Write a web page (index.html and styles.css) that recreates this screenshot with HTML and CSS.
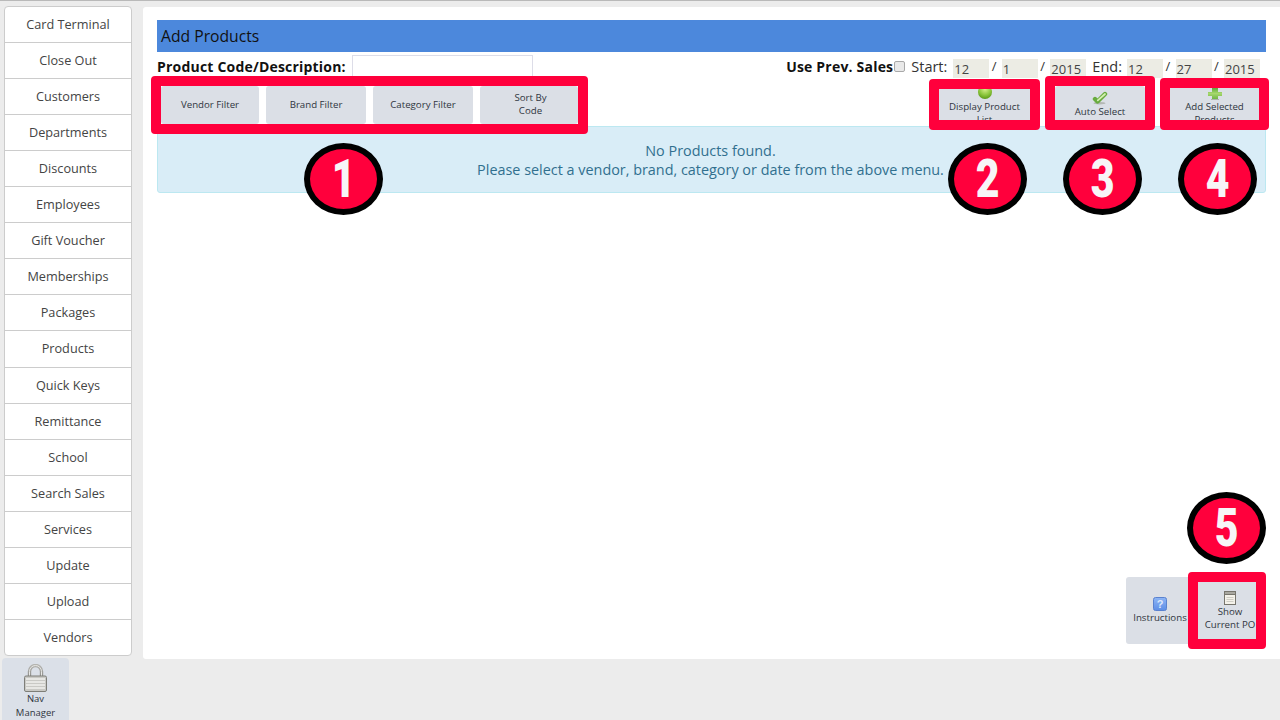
FILE: index.html
```html
<!DOCTYPE html>
<html lang="en">
<head>
<meta charset="utf-8">
<title>Add Products</title>
<link rel="stylesheet" href="styles.css">
</head>
<body>
<div class="layout">
  <nav class="sidebar">
    <a class="side-item">Card Terminal</a>
    <a class="side-item">Close Out</a>
    <a class="side-item">Customers</a>
    <a class="side-item">Departments</a>
    <a class="side-item">Discounts</a>
    <a class="side-item">Employees</a>
    <a class="side-item">Gift Voucher</a>
    <a class="side-item">Memberships</a>
    <a class="side-item">Packages</a>
    <a class="side-item side-tall">Products</a>
    <a class="side-item">Quick Keys</a>
    <a class="side-item">Remittance</a>
    <a class="side-item">School</a>
    <a class="side-item">Search Sales</a>
    <a class="side-item">Services</a>
    <a class="side-item">Update</a>
    <a class="side-item">Upload</a>
    <a class="side-item side-last">Vendors</a>
  </nav>
  <main class="main">
    <h1 class="title">Add Products</h1>
    <div class="form-row">
      <label class="label">Product Code/Description:</label>
      <input class="search" type="text">
      <div class="dates">
        <label class="label">Use Prev. Sales</label>
        <input class="check" type="checkbox">
        <span class="date-word date-start">Start:</span>
        <span class="date-box">12</span><span class="slash">/</span>
        <span class="date-box">1</span><span class="slash">/</span>
        <span class="date-box">2015</span>
        <span class="date-word date-end">End:</span>
        <span class="date-box">12</span><span class="slash">/</span>
        <span class="date-box">27</span><span class="slash">/</span>
        <span class="date-box">2015</span>
      </div>
    </div>
    <div class="toolbar">
      <button class="btn btn-filter b-vendor">Vendor Filter</button>
      <button class="btn btn-filter b-brand">Brand Filter</button>
      <button class="btn btn-filter b-category">Category Filter</button>
      <button class="btn btn-filter b-sort">Sort By<br>Code</button>
      <button class="btn btn-tool b-display">
        <svg class="ico" width="14" height="12" viewBox="0 0 14 12"><defs><radialGradient id="g1" cx="50%" cy="30%" r="70%"><stop offset="0" stop-color="#d6ef8c"/><stop offset=".6" stop-color="#8cc63c"/><stop offset="1" stop-color="#5b9a18"/></radialGradient></defs><circle cx="7" cy="4" r="7" fill="url(#g1)"/></svg>
        <span>Display Product List</span>
      </button>
      <button class="btn btn-tool b-auto">
        <svg class="ico" width="16" height="14" viewBox="0 0 16 14"><ellipse cx="7.500" cy="12.200" rx="6" ry="1.300" fill="#b4b8b4"/><path d="M3 8l2.500 2.500L13 3" fill="none" stroke="#68ab3e" stroke-width="4.400" stroke-linecap="round" stroke-linejoin="round"/><path d="M5.800 9.400L13 3" fill="none" stroke="#d3efb0" stroke-width="1.800" stroke-linecap="round"/></svg>
        <span>Auto Select</span>
      </button>
      <button class="btn btn-tool b-add">
        <svg class="ico" width="14" height="12" viewBox="0 0 14 12"><defs><linearGradient id="g2" x1="0" y1="0" x2="0" y2="1"><stop offset="0" stop-color="#5fa83a"/><stop offset=".5" stop-color="#a6d86c"/><stop offset="1" stop-color="#6fb545"/></linearGradient></defs><rect x="3" y="11" width="8" height="1" fill="#aeb2ae"/><path d="M4 0h6v4h4v4h-4v3H4V8H0V4h4z" fill="url(#g2)"/></svg>
        <span>Add Selected Products</span>
      </button>
    </div>
    <div class="info">No Products found.<br>Please select a vendor, brand, category or date from the above menu.</div>
    <div class="bottom">
      <button class="btn btn-big b-inst">
        <svg class="ico" width="14" height="14" viewBox="0 0 14 14"><defs><linearGradient id="g3" x1="0" y1="0" x2="0" y2="1"><stop offset="0" stop-color="#8fb6f5"/><stop offset="1" stop-color="#5d8ee6"/></linearGradient></defs><rect x=".5" y=".5" width="13" height="13" rx="2" fill="url(#g3)" stroke="#5a82cf"/><text class="qmark" x="7" y="11" text-anchor="middle">?</text></svg>
        <span>Instructions</span>
      </button>
      <button class="btn btn-big b-po">
        <svg class="ico" width="12" height="14" viewBox="0 0 12 14"><rect x=".5" y="1.500" width="11" height="12" fill="#f4f2ea" stroke="#77756d"/><rect x=".5" y=".5" width="11" height="3" fill="#a9a8a0" stroke="#77756d"/><path d="M2.500 6.500h7M2.500 8.500h7M2.500 10.500h7" stroke="#cfcdc5"/></svg>
        <span>Show<br>Current PO</span>
      </button>
    </div>
    <span class="mark m1"></span>
    <span class="mark m2"></span>
    <span class="mark m3"></span>
    <span class="mark m4"></span>
    <span class="mark m5"></span>
    <span class="badge b1"><span class="digit">1</span></span>
    <span class="badge b2"><span class="digit">2</span></span>
    <span class="badge b3"><span class="digit">3</span></span>
    <span class="badge b4"><span class="digit">4</span></span>
    <span class="badge b5"><span class="digit">5</span></span>
  </main>
</div>
<button class="nav-manager">
  <svg class="lock" width="23" height="28" viewBox="0 0 23 28"><defs><linearGradient id="g4" x1="0" y1="0" x2="0" y2="1"><stop offset="0" stop-color="#b4b4b0"/><stop offset="1" stop-color="#8e8e8a"/></linearGradient></defs><path d="M5.500 13V7.500a6 6 0 0 1 12 0V13" fill="none" stroke="url(#g4)" stroke-width="3.400"/><path d="M5.500 13V7.500a6 6 0 0 1 12 0V13" fill="none" stroke="#e8e8e6" stroke-width="1"/><rect x=".5" y="12" width="22" height="15.500" rx="1.500" fill="#c9c9c5" stroke="#7e7e78"/><path d="M2 15h19M2 18h19M2 21h19M2 24h19" stroke="#f1f1ee" stroke-width="1.300"/></svg>
  <span>Nav<br>Manager</span>
</button>
</body>
</html>
```
FILE: styles.css
```css
* { box-sizing: border-box; }
html, body { margin: 0; height: 720px; overflow: hidden; }
body {
  background: #ececec;
  border-top: 1px solid #b9b9b9;
  font-family: "Open Sans", "Liberation Sans", sans-serif;
  color: #333;
}
.layout { display: flex; align-items: flex-start; height: 657px; }
.sidebar {
  display: flex;
  flex-direction: column;
  width: 128px;
  margin: 5px 0 0 4px;
  background: #fff;
  border: 1px solid #ccc;
  border-radius: 4px;
}
.side-item {
  display: flex;
  align-items: center;
  justify-content: center;
  height: 36px;
  padding-bottom: 2px;
  font-size: 12.700px;
  color: #444;
  border-bottom: 1px solid #ccc;
}
.side-tall { height: 37px; }
.side-last { border-bottom: 0; height: 35px; }
.main {
  position: relative;
  display: flex;
  flex-direction: column;
  flex: 1;
  height: 652px;
  margin: 6px 0 0 11px;
  padding: 13px 14px 15px;
  background: #fff;
  border-radius: 3px 0 0 3px;
}
.title {
  margin: 0;
  height: 32px;
  padding-left: 4px;
  background: #4c88dc;
  color: #111;
  font-size: 15.700px;
  font-weight: 400;
  line-height: 32px;
}
.form-row { display: flex; align-items: flex-start; height: 34px; padding-top: 3px; }
.label { margin-top: 2px; font-size: 14px; font-weight: 700; color: #111; line-height: 19px; white-space: nowrap; letter-spacing: .2px; }
.search {
  width: 181px;
  height: 30px;
  margin-left: 6px;
  border: 1px solid #dddde8;
  background: #fff;
}
.dates { display: flex; align-items: flex-start; margin-left: auto; margin-right: 6px; }
.check {
  appearance: none;
  width: 11px;
  height: 11px;
  margin: 6px 0 0 1px;
  background: #e9e9e9;
  border: 1px solid #a8a8a8;
  border-radius: 2px;
}
.date-word { margin-top: 2px; font-size: 14.500px; line-height: 19px; color: #333; }
.date-start { margin-left: 6px; margin-right: 6px; }
.date-end { margin-left: 6px; margin-right: 5px; }
.date-box {
  width: 36px;
  height: 19px;
  margin-top: 4px;
  padding-left: 1px;
  background: #ecece4;
  font-size: 13px;
  line-height: 20px;
  color: #444;
}
.slash { width: 12.500px; margin-top: 2px; padding-left: 2.500px; font-size: 13px; line-height: 19px; color: #333; }
.toolbar { display: flex; align-items: flex-start; height: 40px; }
.btn {
  border: 0;
  padding: 0;
  background: #dbdfe6;
  border-radius: 3px;
  font-family: inherit;
  font-size: 9.700px;
  line-height: 13px;
  color: #2f3540;
  overflow: hidden;
}
.btn-filter { height: 38px; padding-bottom: 2px; margin-right: 7px; }
.b-vendor { width: 98px; margin-left: 4px; }
.b-brand, .b-category { width: 100px; }
.b-sort { width: 98px; margin-right: 0; padding-left: 3px; }
.btn-tool {
  display: flex;
  flex-direction: column;
  align-items: center;
  height: 40px;
  padding-top: 2px;
}
.ico { display: block; flex: none; }
.b-display { width: 91px; margin-left: auto; }
.b-display span { width: 80px; }
.b-auto { width: 90px; margin-left: 25px; padding-top: 5px; }
.b-add { width: 89px; margin-left: 25px; margin-right: 7px; }
.b-add span { width: 80px; }
.info {
  height: 67px;
  padding: 14px 2px 0 0;
  background: #d9edf7;
  border: 1px solid #bce8f1;
  border-radius: 3px;
  color: #31708f;
  font-size: 14.400px;
  line-height: 19px;
  text-align: center;
}
.bottom { display: flex; justify-content: flex-end; align-items: flex-end; margin-top: auto; }
.btn-big {
  display: flex;
  flex-direction: column;
  align-items: center;
  justify-content: center;
  height: 67px;
}
.b-inst { width: 68px; padding-bottom: 1px; white-space: nowrap; border-radius: 3px 0 0 3px; }
.b-po { width: 72px; padding-top: 1px; border-radius: 0 3px 3px 0; }
.qmark { font-family: "Liberation Sans", sans-serif; font-size: 11px; font-weight: 700; fill: #dfe9fb; }
.mark {
  position: absolute;
  border: 10px solid #ff003c;
  border-radius: 4px;
  pointer-events: none;
}
.m1 { left: 8px; top: 69px; width: 437px; height: 58px; }
.m2 { left: 786px; top: 72px; width: 111px; height: 51px; }
.m3 { left: 902px; top: 69px; width: 110px; height: 54px; }
.m4 { left: 1017px; top: 71px; width: 109px; height: 52px; }
.m5 { left: 1045px; top: 565px; width: 78px; height: 77px; }
.badge {
  position: absolute;
  display: flex;
  align-items: center;
  justify-content: center;
  width: 79px;
  height: 72px;
  background: #ff003c;
  border: 6px solid #000;
  border-radius: 50%;
  color: #f7f5f7;
  font-family: Roboto, "Liberation Sans", sans-serif;
  font-weight: 900;
  font-size: 54px;
  line-height: 1;
}
.digit { display: block; transform: scaleX(.76); }
.b1 { left: 161px; top: 136px; }
.b2 { left: 805px; top: 136px; }
.b3 { left: 920px; top: 136px; }
.b4 { left: 1035px; top: 136px; }
.b5 { left: 1044px; top: 485px; }
.nav-manager {
  display: flex;
  flex-direction: column;
  align-items: center;
  width: 67px;
  height: 62px;
  margin: 0 0 0 2px;
  padding: 6px 0 0;
  border: 0;
  border-radius: 4px 4px 0 0;
  background: #dbe0e8;
  font-family: inherit;
  font-size: 9.500px;
  line-height: 14px;
  color: #2f3540;
  overflow: hidden;
}
.lock { display: block; flex: none; margin-bottom: 0; }
```
